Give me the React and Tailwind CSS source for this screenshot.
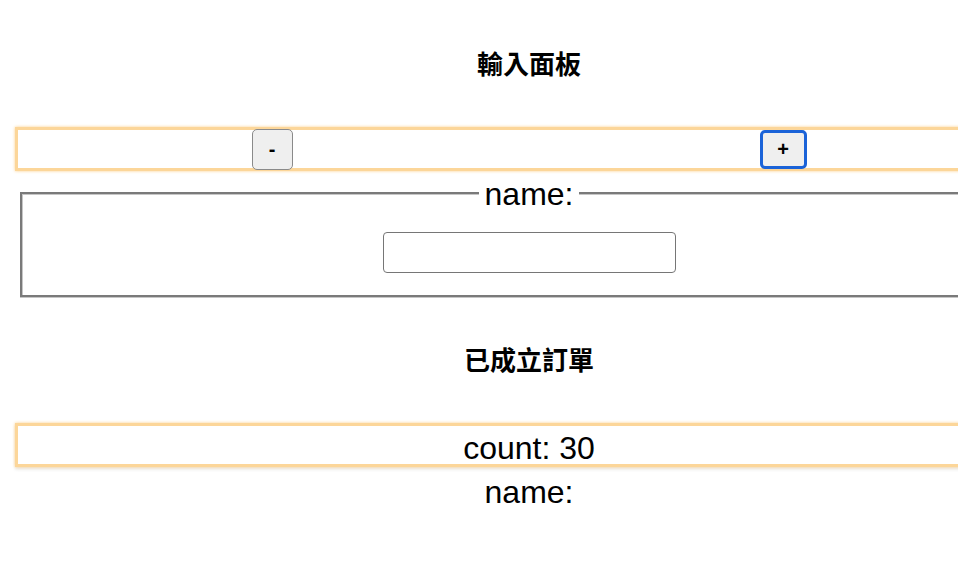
import React from "react";

const font = { fontFamily: '"Liberation Sans", "Noto Sans CJK TC", sans-serif' };

export default function App() {
  return (
    <div className="w-[958px] h-[570px] overflow-hidden bg-white text-black" style={font}>
      {/* page is wider than the window, centre sits at x=529 */}
      <div className="w-[1058px] px-[15px]">
        <h2 className="pt-[50px] text-center text-[26px] leading-[30px] font-bold">輸入面板</h2>

        {/* counter bar */}
        <div className="mt-[47px] h-[44px] flex items-center justify-around border-[3px] border-[#fcd699] shadow-[0_0_3px_#fbd08a]">
          <button className="w-[41px] h-[41px] flex items-center justify-center bg-[#efefef] border border-[#8a8a8a] rounded-[5px] text-[20px] font-bold leading-none">
            -
          </button>
          <button className="w-[47px] h-[39px] flex items-center justify-center bg-[#efefef] border-[3px] border-[#1b63d8] rounded-[5px] text-[20px] font-bold leading-none">
            +
          </button>
        </div>

        <fieldset className="mt-[3px] mx-[5px] border-2 border-[#7a7a7a] shadow-[inset_1px_1px_0_#c6c6c6,0_1px_0_#c6c6c6,1px_0_0_#c6c6c6] pb-[22px]">
          <legend className="mx-auto px-[6px] bg-white text-[32px] leading-[36px] pt-[2px]">name:</legend>
          <input
            type="text"
            className="block mx-auto mt-[20px] w-[293px] h-[41px] border border-[#767676] rounded-[4px] outline-none"
          />
        </fieldset>

        <h2 className="mt-[49px] text-center text-[26px] leading-[30px] font-bold">已成立訂單</h2>

        {/* order summary */}
        <div className="mt-[47px] h-[44px] flex items-center justify-center pt-[5px] border-[3px] border-[#fcd699] shadow-[0_0_3px_#fbd08a,0_3px_3px_#eeeeee]">
          <span className="text-[32px] leading-none">count: 30</span>
        </div>
        <div className="mt-[7px] text-center text-[32px] leading-[36px]">name:</div>
      </div>
    </div>
  );
}
